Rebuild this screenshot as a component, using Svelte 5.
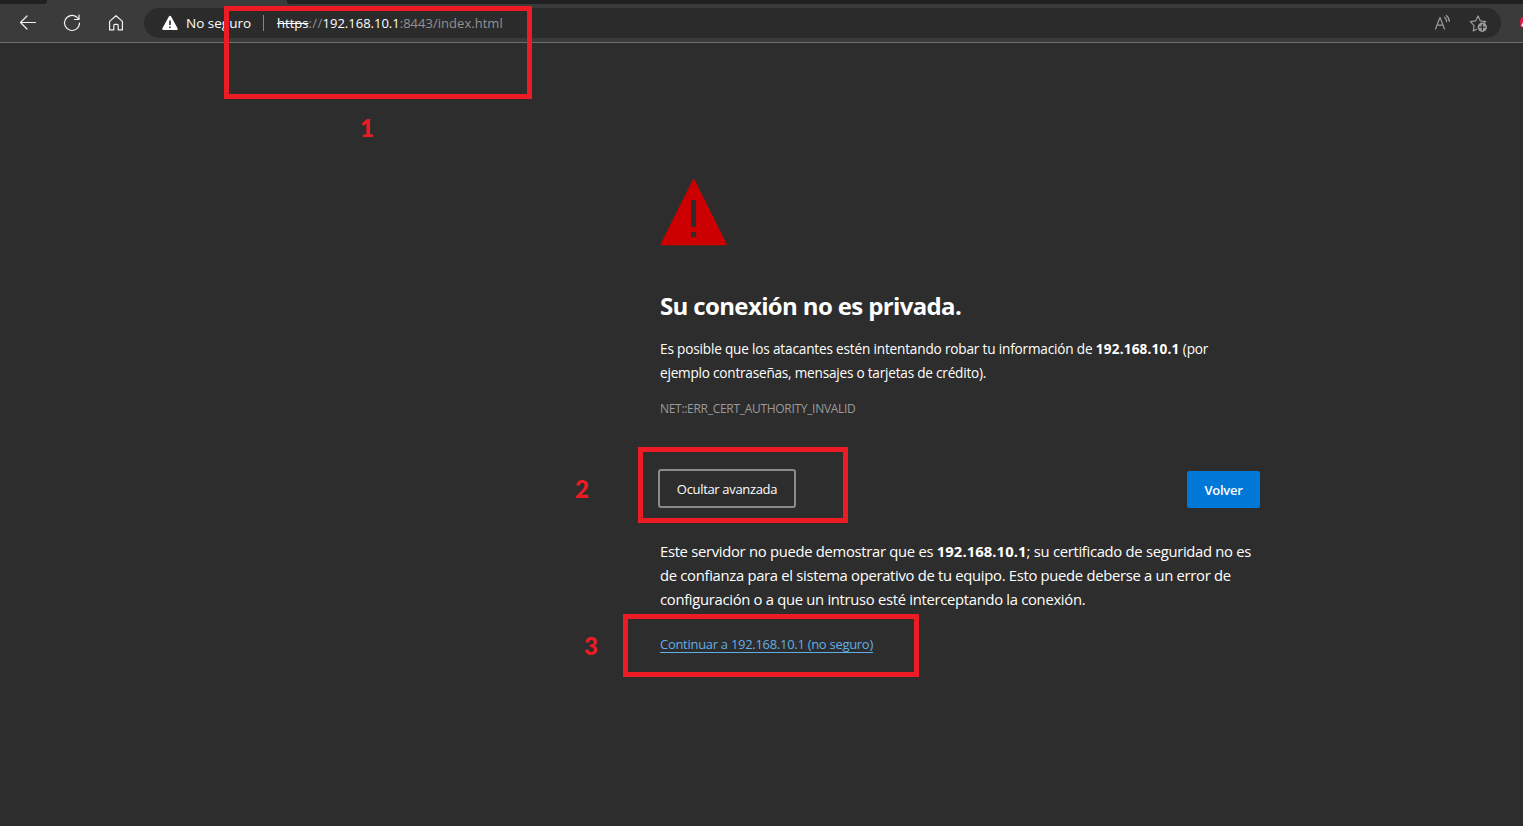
<script>
  const marks = [
    { n: 1, x: 224, y: 6, w: 308, h: 93, nx: 360, ny: 113 },
    { n: 2, x: 638, y: 447, w: 210, h: 76, nx: 575, ny: 474 },
    { n: 3, x: 623, y: 614, w: 296, h: 63, nx: 584, ny: 631 }
  ];
</script>

<div class="window">
  <div class="tabs"><span class="left"></span><span class="right"></span></div>
  <header>
    <nav>
      <svg width="20" height="20" viewBox="0 0 20 20"><path d="M17.500 9.500h-15M9 3L2.500 9.500 9 16" /></svg>
      <svg width="20" height="20" viewBox="0 0 20 20"><path d="M17.500 10a7.500 7.500 0 1 1-2.600-5.700L17 6.400M17 2v4.500h-4.600" /></svg>
      <svg width="20" height="20" viewBox="0 0 20 20"><path d="M3.600 8.400L10 2.700l6.400 5.700v8.500h-4.200v-4.500q0-1-1-1H8.800q-1 0-1 1v4.500H3.600z" /></svg>
    </nav>
    <div class="address">
      <svg class="warn" width="18" height="16" viewBox="0 0 18 16"><path d="M9 .8q.7 0 1.100.8l6.600 12q.5 1.200-.8 1.400H2.100Q.8 14.800 1.300 13.600l6.600-12Q8.300.8 9 .8z" fill="#fff" /><path d="M9 5.500v4.600M9 11.500v1.600" stroke="#2b2b2b" stroke-width="1.600" /></svg>
      <span class="unsafe">No seguro</span>
      <i></i>
      <span class="url"><s>https</s><span class="slashes">://</span><b>192.168.10.1</b>:8443/index.html</span>
      <svg class="read" width="20" height="20" viewBox="0 0 20 20"><path d="M2.500 16L7 4.500 11.500 16M4.100 12.200h5.800M11.600 4.200q2 1.600 2.100 4.500M13.300 2.400q2.900 2.200 3.100 6" /></svg>
      <svg class="star" width="20" height="20" viewBox="0 0 20 20"><path d="M7.500 16.300l-3.200 1.600.8-5.300L1.400 8.700l5.200-.8L9 3l2.400 4.900 5.200.8-1.300 1.300" /><circle cx="13.300" cy="14.200" r="4.700" fill="#9b9b9b" stroke="none" /><path d="M13.300 11.500v5.400M10.600 14.200H16" class="plus" /></svg>
    </div>
    <svg class="edge" width="3" height="12" viewBox="0 0 3 12"><path d="M3 0L1.500 .5 .2 3v6L1.500 10.500H3z" fill="#f01945" /><path d="M3 5L1.200 9 3 9.500z" fill="#fff" /></svg>
  </header>

  <main>
    <svg class="alert" width="68" height="68" viewBox="0 0 68 68"><path d="M33.700 0L67.300 67.300H.1z" fill="#c00" /><path d="M31 22h5v27h-5zM31 54h5v5h-5z" fill="#2d2d2d" /></svg>
    <h1>Su conexión no es privada.</h1>
    <p class="intro"><span class="l1">Es posible que los atacantes estén intentando robar tu información de <b>192.168.10.1</b> (por</span><span class="l2">ejemplo contraseñas, mensajes o tarjetas de crédito).</span></p>
    <p class="code">NET::ERR_CERT_AUTHORITY_INVALID</p>
    <div class="buttons">
      <button class="advanced"><span>Ocultar avanzada</span></button>
      <button class="back"><span>Volver</span></button>
    </div>
    <p class="detail"><span class="d1">Este servidor no puede demostrar que es <b>192.168.10.1</b>; su certificado de seguridad no es</span><span class="d2">de confianza para el sistema operativo de tu equipo. Esto puede deberse a un error de</span><span class="d3">configuración o a que un intruso esté interceptando la conexión.</span></p>
    <a href="#continue"><span>Continuar a 192.168.10.1 (no seguro)</span></a>
  </main>

  {#each marks as m}
    <div class="frame" style="left:{m.x}px;top:{m.y}px;width:{m.w}px;height:{m.h}px"></div>
    <strong class="number" style="left:{m.nx}px;top:{m.ny}px">{m.n}</strong>
  {/each}
</div>

<style>
  :global(body) { margin: 0; background: #2d2d2d; }
  * { box-sizing: border-box; }
  .window { position: relative; height: 826px; overflow: hidden; background: #2d2d2d; color: #fff; font-family: "Open Sans", "Noto Sans", sans-serif; }
  .tabs { height: 4px; background: #3b3b3b; display: flex; justify-content: space-between; }
  .left { width: 47px; background: #202020; border-bottom-right-radius: 3px; }
  .right { width: 1236px; background: #202020; border-bottom-left-radius: 3px; }
  header { height: 39px; display: flex; align-items: flex-start; background: #3b3b3b; border-bottom: 1px solid #6c6e6c; }
  nav { display: flex; gap: 24px; width: 144px; padding: 9px 0 0 18px; flex: none; }
  nav svg, .read, .star { fill: none; stroke: #f2f2f2; stroke-width: 1.2; stroke-linejoin: round; stroke-linecap: round; flex: none; }
  .address { display: flex; align-items: center; width: 1357px; height: 30px; margin-top: 4px; border-radius: 15px; background: #2b2b2b; padding: 0 12px 0 17px; font-size: 13px; flex: none; white-space: nowrap; }
  .warn { margin-right: 7px; }
  .unsafe { width: 77px; font-size: 13.5px; }
  .address i { width: 1px; height: 16px; background: #858585; margin-right: 13px; }
  .url { color: #929292; margin-right: auto; letter-spacing: .03px; }
  .url s { color: #fff; }
  .url .slashes { letter-spacing: .35px; }
  .url b { color: #fff; font-weight: 400; letter-spacing: 0; }
  .read, .star { stroke: #9b9b9b; }
  .read { margin-right: 16px; }
  .star .plus { stroke: #2b2b2b; }
  .edge { margin: 13px 0 0 19px; flex: none; }
  main { width: 600px; margin-left: 660px; padding-top: 135px; display: flex; flex-direction: column; align-items: flex-start; }
  .alert { display: block; }
  h1 { margin: 42px 0 0; font-size: 24px; line-height: 36px; font-weight: 700; letter-spacing: -.64px; white-space: nowrap; }
  p { margin: 0; white-space: nowrap; }
  p > span { display: block; width: max-content; }
  .intro { font-size: 13.6px; line-height: 24px; margin-top: 13px; }
  .l1 { letter-spacing: -.175px; }
  .l1 b { letter-spacing: .17px; }
  .l2 { letter-spacing: -.215px; }
  .code { font-size: 12px; line-height: 20px; margin-top: 14px; color: #9a9a9a; letter-spacing: -.3px; width: max-content; }
  .buttons { display: flex; justify-content: space-between; width: 602px; margin: 50px 0 0 -2px; }
  button { font: inherit; font-size: 13px; color: #fff; padding: 0; white-space: nowrap; }
  .advanced { width: 138px; height: 39px; border: 2px solid #8b8b8b; border-radius: 3px; background: #2d2d2d; letter-spacing: -.33px; }
  .back { width: 73px; height: 37px; margin-top: 2px; border: 0; border-radius: 2px; background: #0078d7; font-weight: 600; letter-spacing: -.3px; }
  .detail { font-size: 14.8px; line-height: 24px; margin-top: 31px; }
  .d1 { letter-spacing: -.31px; }
  .d1 b { letter-spacing: .08px; }
  .d1 { word-spacing: .1px; }
  .d2, .d3 { letter-spacing: -.3px; }
  a { color: #63ade5; font-size: 13px; line-height: 15px; margin-top: 26px; text-decoration: none; border-bottom: 1px solid; letter-spacing: -.29px; }
  .frame { position: absolute; border: 5px solid #ed1c24; }
  .number { position: absolute; font-family: Lato, sans-serif; font-size: 24px; line-height: 30px; font-weight: 900; color: #ed1c24; }
</style>
